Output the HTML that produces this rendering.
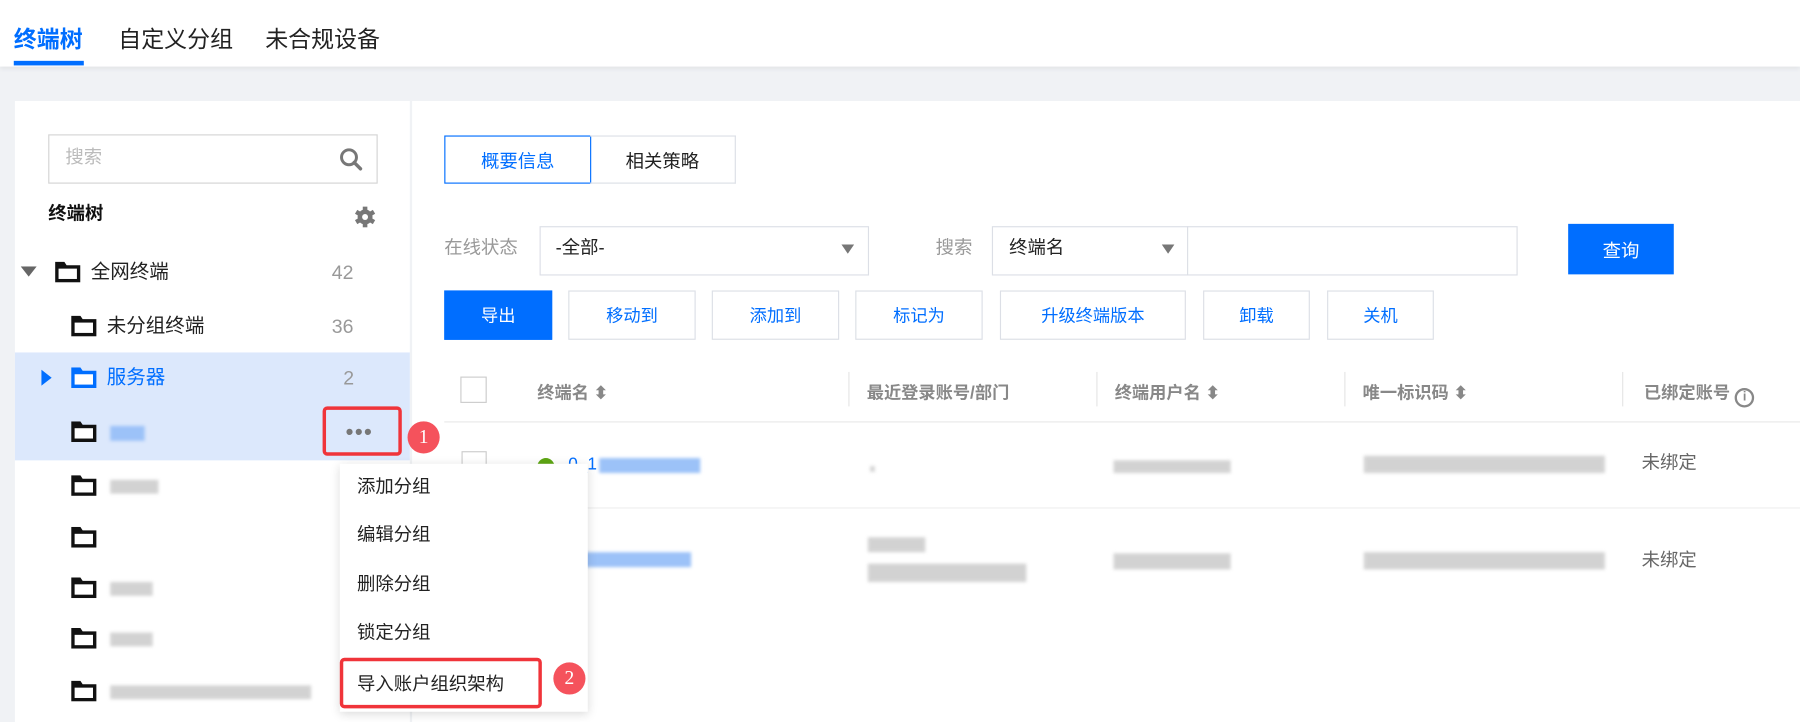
<!DOCTYPE html>
<html><head><meta charset="utf-8"><style>
*{margin:0;padding:0;box-sizing:border-box}
html,body{width:1800px;height:722px;overflow:hidden;background:#f0f2f5}
body{font-family:"Liberation Sans","Noto Sans CJK SC",sans-serif;}
#s{position:absolute;left:0;top:0;width:1568px;height:629px;transform:scale(1.148);transform-origin:0 0;background:#f0f2f5}
.a{position:absolute}
.t{position:absolute;white-space:nowrap;line-height:1}
.btn{position:absolute;border:1px solid #dcdfe6;background:#fff;color:#006eff;font-size:15px;display:flex;align-items:center;justify-content:center;height:43px;top:253px}
.fold{position:absolute;width:22px;height:18px}
.blur{position:absolute;background:#c8c8c8;filter:blur(1.5px);opacity:.8}
.bb{position:absolute;background:#9cc2f8;filter:blur(1.5px)}
.sep{position:absolute;top:324px;width:1px;height:30px;background:#e5e5e5}
.hd{position:absolute;top:331px;font-size:15px;color:#888;font-weight:bold;white-space:nowrap}
.so{font-size:15px;vertical-align:0}
</style></head><body><div id="s">
<svg width="0" height="0" style="position:absolute"><defs>
<symbol id="f" viewBox="0 0 22 18"><path d="M0 0H8L10 3H22V18H0Z" fill="currentColor"/><rect x="3" y="6" width="16" height="9" fill="#fff"/></symbol>
</defs></svg>
<div class="a" style="left:0;top:0;width:1568px;height:58px;background:#fff;box-shadow:0 2px 4px rgba(0,0,0,.06)"></div>
<div class="t" style="left:12px;top:25px;font-size:20px;font-weight:bold;color:#006eff">终端树</div>
<div class="t" style="left:103px;top:25px;font-size:20px;color:#222">自定义分组</div>
<div class="t" style="left:231px;top:25px;font-size:20px;color:#222">未合规设备</div>
<div class="a" style="left:12px;top:53px;width:61px;height:4px;background:#006eff"></div>

<div class="a" style="left:13px;top:88px;width:344px;height:541px;background:#fff"></div>
<div class="a" style="left:359px;top:88px;width:1209px;height:541px;background:#fff"></div>

<div class="a" style="left:42px;top:117px;width:287px;height:43px;border:1px solid #d4d4d4"></div>
<div class="t" style="left:57px;top:130px;font-size:16px;color:#bbb">搜索</div>
<svg class="a" style="left:295px;top:128px" width="22" height="22" viewBox="0 0 22 22"><circle cx="9" cy="9" r="6.5" fill="none" stroke="#777" stroke-width="2.6"/><path d="M13.5 13.5L19 19" stroke="#777" stroke-width="3" stroke-linecap="round"/></svg>
<div class="t" style="left:42px;top:179px;font-size:16px;font-weight:bold;color:#111">终端树</div>
<svg class="a" style="left:308px;top:179px" width="20" height="20" viewBox="0 0 20 20"><g fill="#777"><circle cx="10" cy="10" r="6.5"/><rect x="8" y="1" width="4" height="18"/><rect x="8" y="1" width="4" height="18" transform="rotate(60 10 10)"/><rect x="8" y="1" width="4" height="18" transform="rotate(120 10 10)"/></g><circle cx="10" cy="10" r="2.6" fill="#fff"/></svg>

<svg class="a" style="left:18px;top:232px" width="14" height="10"><path d="M0 0H14L7 9Z" fill="#666"/></svg>
<svg class="fold" style="left:48px;top:228px;color:#111"><use href="#f"/></svg>
<div class="t" style="left:79px;top:228px;font-size:17px;color:#222">全网终端</div>
<div class="t" style="left:289px;top:229px;font-size:17px;color:#999">42</div>

<svg class="fold" style="left:62px;top:275px;color:#111"><use href="#f"/></svg>
<div class="t" style="left:93px;top:275px;font-size:17px;color:#222">未分组终端</div>
<div class="t" style="left:289px;top:276px;font-size:17px;color:#999">36</div>

<div class="a" style="left:13px;top:307px;width:344px;height:94px;background:#dce8fc"></div>
<svg class="a" style="left:36px;top:322px" width="10" height="14"><path d="M0 0V14L9 7Z" fill="#006eff"/></svg>
<svg class="fold" style="left:62px;top:320px;color:#006eff"><use href="#f"/></svg>
<div class="t" style="left:93px;top:320px;font-size:17px;color:#006eff">服务器</div>
<div class="t" style="left:299px;top:321px;font-size:17px;color:#999">2</div>

<svg class="fold" style="left:62px;top:367px;color:#111"><use href="#f"/></svg>
<div class="bb" style="left:96px;top:371px;width:30px;height:13px"></div>
<div class="a" style="left:281px;top:354px;width:69px;height:43px;border:3px solid #f0343a;border-radius:4px"></div>
<div class="t" style="left:301px;top:367px;font-size:20px;color:#777;letter-spacing:1px">•••</div>
<div class="a" style="left:355px;top:367px;width:28px;height:28px;border-radius:50%;background:#f5525c;color:#fff;font-family:'Liberation Serif',serif;font-size:17px;display:flex;align-items:center;justify-content:center">1</div>

<svg class="fold" style="left:62px;top:414px;color:#111"><use href="#f"/></svg>
<div class="blur" style="left:96px;top:418px;width:42px;height:12px"></div>
<svg class="fold" style="left:62px;top:459px;color:#111"><use href="#f"/></svg>
<svg class="fold" style="left:62px;top:503px;color:#111"><use href="#f"/></svg>
<div class="blur" style="left:96px;top:507px;width:37px;height:12px"></div>
<svg class="fold" style="left:62px;top:547px;color:#111"><use href="#f"/></svg>
<div class="blur" style="left:96px;top:551px;width:37px;height:12px"></div>
<svg class="fold" style="left:62px;top:593px;color:#111"><use href="#f"/></svg>
<div class="blur" style="left:96px;top:597px;width:175px;height:12px"></div>

<div class="a" style="left:387px;top:118px;width:128px;height:42px;border:1px solid #006eff;color:#006eff;font-size:16px;display:flex;align-items:center;justify-content:center">概要信息</div>
<div class="a" style="left:514px;top:118px;width:127px;height:42px;border:1px solid #dcdfe6;border-left:none;color:#222;font-size:16px;display:flex;align-items:center;justify-content:center">相关策略</div>

<div class="t" style="left:387px;top:209px;font-size:16px;color:#999">在线状态</div>
<div class="a" style="left:470px;top:197px;width:287px;height:43px;border:1px solid #dcdfe6"></div>
<div class="t" style="left:484px;top:209px;font-size:16px;color:#222">-全部-</div>
<svg class="a" style="left:733px;top:213px" width="11" height="8"><path d="M0 0H11L5.5 8Z" fill="#777"/></svg>
<div class="t" style="left:815px;top:209px;font-size:16px;color:#999">搜索</div>
<div class="a" style="left:864px;top:197px;width:458px;height:43px;border:1px solid #dcdfe6"></div>
<div class="a" style="left:1034px;top:197px;width:1px;height:43px;background:#dcdfe6"></div>
<div class="t" style="left:879px;top:209px;font-size:16px;color:#222">终端名</div>
<svg class="a" style="left:1012px;top:213px" width="11" height="8"><path d="M0 0H11L5.5 8Z" fill="#777"/></svg>
<div class="a" style="left:1366px;top:195px;width:92px;height:44px;background:#006eff;color:#fff;font-size:16px;display:flex;align-items:center;justify-content:center">查询</div>

<div class="btn" style="left:387px;width:94px;background:#006eff;color:#fff;border-color:#006eff">导出</div>
<div class="btn" style="left:495px;width:111px">移动到</div>
<div class="btn" style="left:620px;width:111px">添加到</div>
<div class="btn" style="left:745px;width:111px">标记为</div>
<div class="btn" style="left:871px;width:162px">升级终端版本</div>
<div class="btn" style="left:1048px;width:93px">卸载</div>
<div class="btn" style="left:1156px;width:93px">关机</div>

<div class="a" style="left:401px;top:328px;width:23px;height:23px;border:1px solid #ccc"></div>
<div class="hd" style="left:468px">终端名 <span class="so">⬍</span></div>
<div class="sep" style="left:739px"></div>
<div class="hd" style="left:755px">最近登录账号/部门</div>
<div class="sep" style="left:955px"></div>
<div class="hd" style="left:971px">终端用户名 <span class="so">⬍</span></div>
<div class="sep" style="left:1171px"></div>
<div class="hd" style="left:1187px">唯一标识码 <span class="so">⬍</span></div>
<div class="sep" style="left:1413px"></div>
<div class="hd" style="left:1432px">已绑定账号 <span style="display:inline-block;width:17px;height:17px;border:2px solid #888;border-radius:50%;font-size:11px;text-align:center;line-height:13px;vertical-align:-2px">i</span></div>
<div class="a" style="left:387px;top:367px;width:1181px;height:1px;background:#e8e8e8"></div>

<div class="a" style="left:402px;top:393px;width:22px;height:22px;border:1px solid #ccc"></div>
<div class="a" style="left:468px;top:399px;width:15px;height:15px;border-radius:50%;background:#5ea614"></div>
<div class="t" style="left:495px;top:397px;font-size:15px;color:#006eff">0_1</div>
<div class="bb" style="left:522px;top:399px;width:88px;height:13px"></div>
<div class="blur" style="left:758px;top:406px;width:4px;height:5px"></div>
<div class="blur" style="left:970px;top:401px;width:102px;height:11px"></div>
<div class="blur" style="left:1188px;top:397px;width:210px;height:15px"></div>
<div class="t" style="left:1430px;top:396px;font-size:16px;color:#666">未绑定</div>
<div class="a" style="left:387px;top:442px;width:1181px;height:1px;background:#eee"></div>
<div class="a" style="left:494px;top:495px;width:8px;height:2px;background:#006eff"></div>
<div class="bb" style="left:502px;top:481px;width:100px;height:13px"></div>
<div class="blur" style="left:756px;top:468px;width:50px;height:13px"></div>
<div class="blur" style="left:756px;top:491px;width:138px;height:16px"></div>
<div class="blur" style="left:970px;top:482px;width:102px;height:14px"></div>
<div class="blur" style="left:1188px;top:481px;width:210px;height:15px"></div>
<div class="t" style="left:1430px;top:481px;font-size:16px;color:#666">未绑定</div>

<div class="a" style="left:296px;top:404px;width:216px;height:216px;background:#fff;box-shadow:0 2px 8px rgba(0,0,0,.15)"></div>
<div class="t" style="left:311px;top:417px;font-size:16px;color:#222">添加分组</div>
<div class="t" style="left:311px;top:459px;font-size:16px;color:#222">编辑分组</div>
<div class="t" style="left:311px;top:502px;font-size:16px;color:#222">删除分组</div>
<div class="t" style="left:311px;top:544px;font-size:16px;color:#222">锁定分组</div>
<div class="t" style="left:311px;top:589px;font-size:16px;color:#222">导入账户组织架构</div>
<div class="a" style="left:296px;top:573px;width:176px;height:44px;border:3px solid #f0343a;border-radius:4px"></div>
<div class="a" style="left:482px;top:577px;width:28px;height:28px;border-radius:50%;background:#f5525c;color:#fff;font-family:'Liberation Serif',serif;font-size:17px;display:flex;align-items:center;justify-content:center">2</div>
</div></body></html>
